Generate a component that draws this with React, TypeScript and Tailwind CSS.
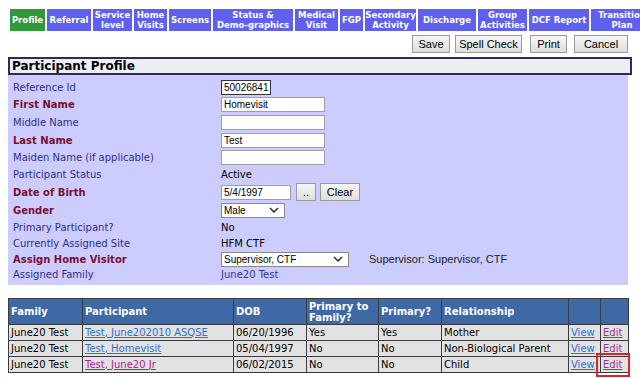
const tabs = [
  { label: ['Profile'], w: 'w-[35px]', active: true },
  { label: ['Referral'], w: 'w-[44px]' },
  { label: ['Service', 'level'], w: 'w-[39px]' },
  { label: ['Home', 'Visits'], w: 'w-[33px]' },
  { label: ['Screens'], w: 'w-[42px]' },
  { label: ['Status &', 'Demo-graphics'], w: 'w-[80px]' },
  { label: ['Medical', 'Visit'], w: 'w-[43px]' },
  { label: ['FGP'], w: 'w-[23px]' },
  { label: ['Secondary', 'Activity'], w: 'w-[51px]' },
  { label: ['Discharge'], w: 'w-[58px]' },
  { label: ['Group', 'Activities'], w: 'w-[49px]' },
  { label: ['DCF Report'], w: 'w-[60px]' },
  { label: ['Transition', 'Plan'], w: 'w-[62px]' },
];

const verdana = "font-['DejaVu_Sans',Verdana,sans-serif]";
const arial = "font-['Liberation_Sans',Arial,sans-serif]";

function Tabs() {
  return (
    <div className="flex gap-[2px] pl-[10px] pt-[9px] h-[31px]">
      {tabs.map((t) => (
        <div
          key={t.label.join(' ')}
          className={`${t.w} shrink-0 h-[22px] flex flex-col items-center justify-center text-center leading-[10px] text-[8.5px] font-bold text-white whitespace-nowrap ${verdana} ${t.active ? 'bg-[#2f9a3a]' : 'bg-[#6060f0]'}`}
        >
          {t.label.map((l) => (
            <span key={l}>{l}</span>
          ))}
        </div>
      ))}
    </div>
  );
}

function Btn({ children, className = '' }: { children: React.ReactNode; className?: string }) {
  return (
    <div
      className={`h-[18px] flex items-center justify-center border border-[#9a9a9a] bg-gradient-to-b from-[#f6f6f6] to-[#dedede] text-[11px] text-black ${arial} ${className}`}
    >
      {children}
    </div>
  );
}

function Input({ value = '', w, strong }: { value?: string; w: string; strong?: boolean }) {
  return (
    <div
      className={`${w} h-[15px] bg-white flex items-center px-[2px] text-[10px] text-black ${arial} ${strong ? 'border border-[#333] ' : 'border border-[#a0a0a0]'}`}
    >
      {value}
    </div>
  );
}

function Select({ value, w }: { value: string; w: string }) {
  return (
    <div className={`${w} h-[15px] bg-white border border-[#888] flex items-center justify-between px-[2px] text-[10px] text-black ${arial}`}>
      <span>{value}</span>
      <svg width="10" height="6" viewBox="0 0 10 6" className="mr-[3px]">
        <path d="M1 1 L5 5 L9 1" fill="none" stroke="#222" strokeWidth="1.4" />
      </svg>
    </div>
  );
}

type Row = { label: string; req?: boolean; h: string; field: React.ReactNode };

const rows: Row[] = [
  { label: 'Reference Id', h: 'h-[17px]', field: <Input value="50026841" w="w-[50px]" strong /> },
  { label: 'First Name', req: true, h: 'h-[17px]', field: <Input value="Homevisit" w="w-[104px]" /> },
  { label: 'Middle Name', h: 'h-[18px]', field: <Input w="w-[104px]" /> },
  { label: 'Last Name', req: true, h: 'h-[18px]', field: <Input value="Test" w="w-[104px]" /> },
  { label: 'Maiden Name (if applicable)', h: 'h-[17px]', field: <Input w="w-[104px]" /> },
  { label: 'Participant Status', h: 'h-[17px]', field: <span className="text-black">Active</span> },
  {
    label: 'Date of Birth',
    req: true,
    h: 'h-[18px]',
    field: (
      <div className="flex items-center">
        <Input value="5/4/1997" w="w-[70px]" />
        <Btn className="w-[20px] ml-[5px] text-[7px] text-[#999]">..</Btn>
        <Btn className="w-[40px] ml-[4px]">Clear</Btn>
      </div>
    ),
  },
  { label: 'Gender', req: true, h: 'h-[18px]', field: <Select value="Male" w="w-[64px]" /> },
  { label: 'Primary Participant?', h: 'h-[17px]', field: <span className="text-black">No</span> },
  { label: 'Currently Assigned Site', h: 'h-[15px]', field: <span className="text-black">HFM CTF</span> },
  {
    label: 'Assign Home Visitor',
    req: true,
    h: 'h-[16px]',
    field: (
      <div className="flex items-center">
        <Select value="Supervisor, CTF" w="w-[128px]" />
        <span className={`ml-[20px] text-[11px] text-[#222] ${arial}`}>Supervisor: Supervisor, CTF</span>
      </div>
    ),
  },
  { label: 'Assigned Family', h: 'h-[15px]', field: <span className="text-[#333399]">June20 Test</span> },
];

const cols = ['w-[74px]', 'w-[151px]', 'w-[73px]', 'w-[72px]', 'w-[63px]', 'w-[127px]', 'w-[32px]', 'w-[28px]'];
const heads = ['Family', 'Participant', 'DOB', 'Primary to Family?', 'Primary?', 'Relationship', '', ''];

const people = [
  { fam: 'June20 Test', name: 'Test, June202010 ASQSE', visited: false, dob: '06/20/1996', ptf: 'Yes', p: 'Yes', rel: 'Mother' },
  { fam: 'June20 Test', name: 'Test, Homevisit', visited: false, dob: '05/04/1997', ptf: 'No', p: 'No', rel: 'Non-Biological Parent' },
  { fam: 'June20 Test', name: 'Test, June20 Jr', visited: true, dob: '06/02/2015', ptf: 'No', p: 'No', rel: 'Child' },
];

const td = 'border border-[#3a3a3a] pl-[2px] py-0 leading-[14px] whitespace-nowrap overflow-hidden';

export default function App() {
  return (
    <div className={`w-[640px] h-[378px] overflow-hidden bg-white ${verdana}`}>
      <Tabs />
      <div className="flex justify-end pr-[12px] pt-[4px] h-[26px] items-start">
        <Btn className="w-[38px]">Save</Btn>
        <Btn className="w-[67px] ml-[5px]">Spell Check</Btn>
        <Btn className="w-[37px] ml-[8px]">Print</Btn>
        <Btn className="w-[54px] ml-[7px]">Cancel</Btn>
      </div>

      <div className="ml-[8px] w-[624px] h-[18px] border-2 border-[#2b2b5e] bg-[#efeff3] flex items-center pl-[2px] text-[12px] font-bold text-black leading-none">
        Participant Profile
      </div>
      <div className="ml-[8px] w-[620px] bg-[#ccccff] pt-[4px] pb-[3px] text-[10px]">
        {rows.map((r) => (
          <div key={r.label} className={`${r.h} flex items-center`}>
            <div className={`w-[213px] pl-[5px] ${r.req ? 'font-bold text-[#7a1030]' : 'text-[#2e2e8a]'}`}>{r.label}</div>
            {r.field}
          </div>
        ))}
      </div>

      <div className="relative mt-[13px] ml-[8px] w-[621px]">
        <table className="border-collapse text-[10px] table-fixed">
          <thead>
            <tr className="bg-[#3e69a6] text-white font-bold h-[26px]">
              {heads.map((h, i) => (
                <th key={i} className={`${cols[i]} border border-[#3a3a3a] text-left pl-[2px] leading-[11px] font-bold`}>
                  {h}
                </th>
              ))}
            </tr>
          </thead>
          <tbody>
            {people.map((p) => (
              <tr key={p.name} className="bg-[#e2e2e2] h-[16px] text-black">
                <td className={td}>{p.fam}</td>
                <td className={td}>
                  <span className={`underline ${p.visited ? 'text-[#b0209a]' : 'text-[#2f6fd0]'}`}>{p.name}</span>
                </td>
                <td className={td}>{p.dob}</td>
                <td className={td}>{p.ptf}</td>
                <td className={td}>{p.p}</td>
                <td className={td}>{p.rel}</td>
                <td className={td}>
                  <span className="underline text-[#2f6fd0]">View</span>
                </td>
                <td className={td}>
                  <span className="underline text-[#993399]">Edit</span>
                </td>
              </tr>
            ))}
          </tbody>
        </table>
        <div className="absolute left-[588px] top-[55px] w-[34px] h-[24px] border-2 border-[#e0202a]" />
      </div>
    </div>
  );
}
